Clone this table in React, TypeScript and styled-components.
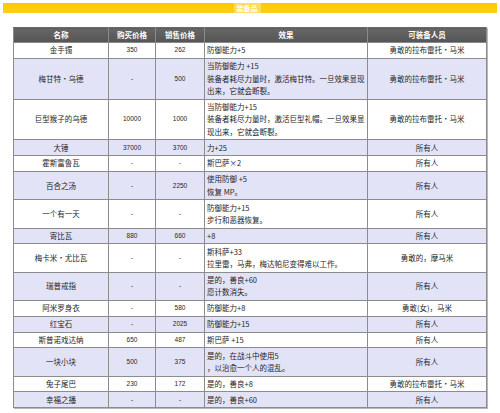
import React from "react";
import styled, { createGlobalStyle } from "styled-components";

const Global = createGlobalStyle`
  html, body { margin: 0; padding: 0; background: #ffffff; }
  body { font-family: "Noto Sans CJK SC", "Noto Sans", sans-serif; color: #222; }
`;

const Page = styled.div`
  width: 500px;
  height: 413px;
  padding: 3px 3px 0 3px;
  box-sizing: border-box;
  display: flex;
  flex-direction: column;
  align-items: stretch;
`;

const TitleBar = styled.div`
  height: 10px;
  background: linear-gradient(#ffc800, #ffcf1a);
  display: flex;
  justify-content: center;
  align-items: stretch;
`;

const TitleBox = styled.div`
  width: 27px;
  margin-left: -6px;
  background: #ffdc5a;
  color: #ffffff;
  font-size: 7px;
  font-weight: bold;
  line-height: 10px;
  text-align: center;
`;

const TableWrap = styled.div`
  margin: 14px 0 0 10px;
  width: 473px;
`;

const Table = styled.table`
  border-collapse: collapse;
  width: 473px;
  table-layout: fixed;
  border: 1px solid #6a6a6a;
  box-shadow: 1px 1px 0 #b8b8b8;
`;

const HeadCell = styled.th`
  background: linear-gradient(#666666, #555555);
  color: #ffffff;
  font-size: 7.5px;
  font-weight: bold;
  height: 14px;
  padding: 0;
  line-height: 14px;
  border: 1px solid #8a8a8a;
  border-top-color: #6a6a6a;
  text-align: center;
`;

const Row = styled.tr<{ $alt: boolean }>`
  background: ${(p) => (p.$alt ? "#e3e3f7" : "#ffffff")};
`;

const Cell = styled.td<{ $align?: "left" | "center"; $num?: boolean }>`
  border: 1px solid #8c8c8c;
  padding: 1.3px 2px 1px 2px;
  line-height: 12.5px;
  font-size: ${(p) => (p.$num ? "6.5px" : "7.5px")};
  font-family: ${(p) =>
    p.$num ? '"Liberation Sans", Arial, sans-serif' : '"Noto Sans CJK SC", "Noto Sans", sans-serif'};
  color: #262626;
  text-align: ${(p) => p.$align ?? "center"};
  vertical-align: middle;
  white-space: nowrap;
  overflow: hidden;
`;

const Line = styled.div`
  display: block;
`;

type Item = {
  name: string;
  buy: string;
  sell: string;
  effect: string[];
  who: string;
};

const items: Item[] = [
  { name: "金手镯", buy: "350", sell: "262", effect: ["防御能力+5"], who: "勇敢的拉布雷托·马米" },
  {
    name: "梅甘特·乌德",
    buy: "-",
    sell: "500",
    effect: ["当防御能力 +15", "装备者耗尽力量时，激活梅甘特。一旦效果显现", "出来，它就会断裂。"],
    who: "勇敢的拉布雷托·马米",
  },
  {
    name: "巨型猴子的乌德",
    buy: "10000",
    sell: "1000",
    effect: ["当防御能力+15", "装备者耗尽力量时，激活巨型礼帽。一旦效果显", "现出来，它就会断裂。"],
    who: "勇敢的拉布雷托·马米",
  },
  { name: "大锤", buy: "37000", sell: "3700", effect: ["力+25"], who: "所有人" },
  { name: "霍斯富鲁瓦", buy: "-", sell: "-", effect: ["斯巴萨×2"], who: "所有人" },
  { name: "百合之汤", buy: "-", sell: "2250", effect: ["使用防御 +5", "恢复 MP。"], who: "所有人" },
  { name: "一个有一天", buy: "-", sell: "-", effect: ["防御能力+15", "步行和恶器恢复。"], who: "所有人" },
  { name: "寄比瓦", buy: "880", sell: "660", effect: ["+8"], who: "所有人" },
  {
    name: "梅卡米·尤比瓦",
    buy: "-",
    sell: "-",
    effect: ["斯科萨+33", "拉里雷，马弗，梅达帕尼变得难以工作。"],
    who: "勇敢的，摩马米",
  },
  { name: "瑞普戒指", buy: "-", sell: "-", effect: ["是的，善良+60", "愿计数消失。"], who: "所有人" },
  { name: "阿米罗身衣", buy: "-", sell: "580", effect: ["防御能力+8"], who: "勇敢(女)，马米" },
  { name: "红宝石", buy: "-", sell: "2025", effect: ["防御能力+15"], who: "所有人" },
  { name: "斯普诺戏达纳", buy: "650", sell: "487", effect: ["斯巴萨 +15"], who: "所有人" },
  {
    name: "一块小块",
    buy: "500",
    sell: "375",
    effect: ["是的，在战斗中使用5", "，以治愈一个人的混乱。"],
    who: "所有人",
  },
  { name: "兔子尾巴", buy: "230", sell: "172", effect: ["是的，善良+8"], who: "勇敢的拉布雷托·马米" },
  { name: "幸福之播", buy: "-", sell: "-", effect: ["是的，善良+60"], who: "所有人" },
];

export default function App() {
  return (
    <>
      <Global />
      <Page>
        <TitleBar>
          <TitleBox>装备品</TitleBox>
        </TitleBar>
        <TableWrap>
          <Table>
            <colgroup>
              <col style={{ width: 95 }} />
              <col style={{ width: 47 }} />
              <col style={{ width: 49 }} />
              <col style={{ width: 163 }} />
              <col style={{ width: 119 }} />
            </colgroup>
            <thead>
              <tr>
                <HeadCell>名称</HeadCell>
                <HeadCell>购买价格</HeadCell>
                <HeadCell>销售价格</HeadCell>
                <HeadCell>效果</HeadCell>
                <HeadCell>可装备人员</HeadCell>
              </tr>
            </thead>
            <tbody>
              {items.map((it, i) => (
                <Row key={it.name} $alt={i % 2 === 1}>
                  <Cell>{it.name}</Cell>
                  <Cell $num>{it.buy}</Cell>
                  <Cell $num>{it.sell}</Cell>
                  <Cell $align="left">
                    {it.effect.map((l, j) => (
                      <Line key={j}>{l}</Line>
                    ))}
                  </Cell>
                  <Cell>{it.who}</Cell>
                </Row>
              ))}
            </tbody>
          </Table>
        </TableWrap>
      </Page>
    </>
  );
}
